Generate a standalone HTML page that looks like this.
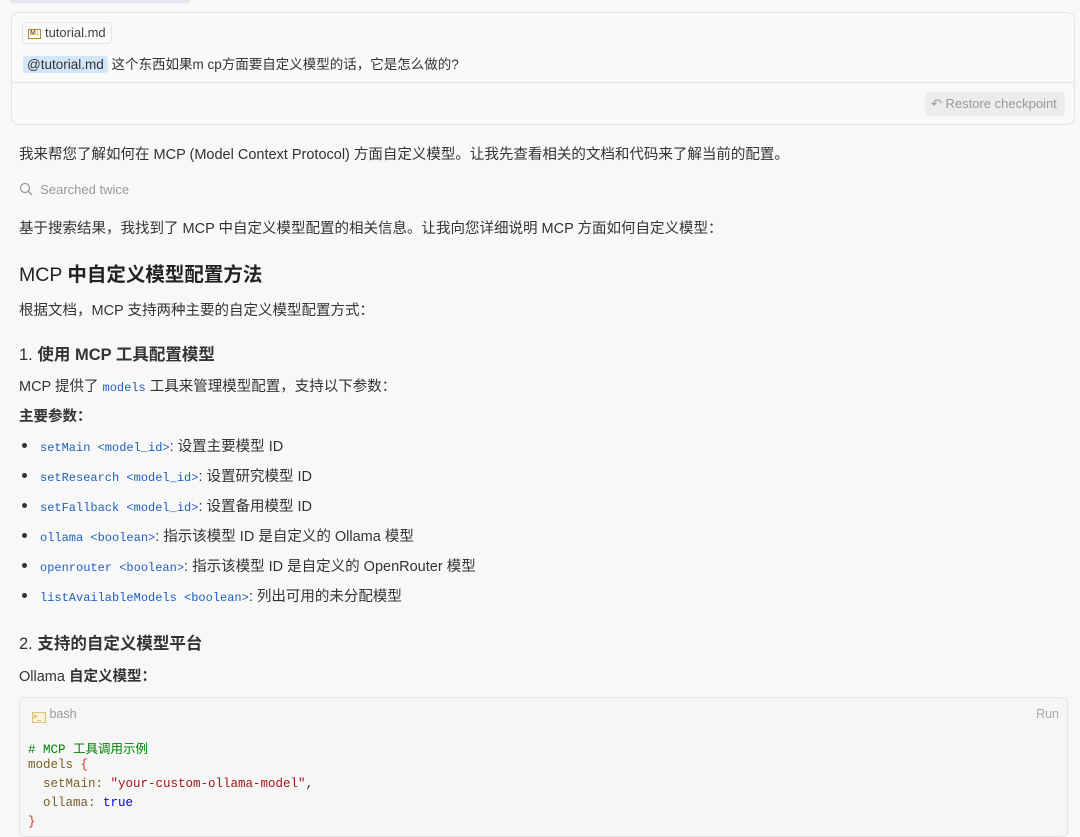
<!DOCTYPE html>
<html><head><meta charset="utf-8"><style>
*{margin:0;padding:0;box-sizing:border-box}
body{width:1080px;height:822px;overflow:hidden;background:#f8f8f8;font-family:"Liberation Sans","Noto Sans CJK SC",sans-serif;color:#333;font-size:14.5px;position:relative}
.a{position:absolute;white-space:nowrap}
.box{position:absolute;left:11px;top:12px;width:1064px;height:113px;border:1px solid #e3e3e3;border-radius:8px;background:#f9f9f9}
.chip{position:absolute;left:10px;top:9px;height:22px;padding:0 5px;border:1px solid #e6e6e6;border-radius:4px;font-size:13px;line-height:20px;color:#444;background:#fafafa}
.mention{background:#d3e6f8;border-radius:3px;padding:1px 4px;color:#333}
.code{font-family:"Liberation Mono",monospace;font-size:12px;color:#1f5fbf}
h2{font-size:19.5px;font-weight:normal;color:#222}
.b{font-weight:bold}
.li{position:absolute;left:22px;white-space:nowrap}
.li:before{content:"";position:absolute;left:0;top:8px;width:5px;height:5px;border-radius:50%;background:#333}
.li span.t{margin-left:18px}
.cb{position:absolute;left:19px;top:697px;width:1049px;height:140px;border:1px solid #e3e3e3;border-radius:6px;background:#f6f6f6}
.cl{position:absolute;left:8px;font-family:"Liberation Mono",monospace;font-size:12.5px;white-space:pre;color:#795e26}
</style></head><body>
<div class="a" style="left:10px;top:0;width:180px;height:3px;background:#e4e6ee;border-radius:0 0 3px 3px"></div>
<div class="box">
 <div class="chip"><span style="display:inline-block;font-size:7px;border:1px solid #b38a3a;color:#8a6a2a;line-height:8px;padding:0 1px;vertical-align:2px;font-weight:bold">M↓</span> tutorial.md</div>
 <div class="a" style="left:11px;top:40px;font-size:13.5px"><span class="mention">@tutorial.md</span> 这个东西如果m cp方面要自定义模型的话，它是怎么做的?</div>
 <div class="a" style="left:0;top:69px;width:1062px;height:1px;background:#e6e6e6"></div>
 <div class="a" style="left:913px;top:79px;width:140px;height:24px;background:#ececec;border-radius:4px;font-size:13px;color:#999;line-height:24px;padding-left:6px">↶ Restore checkpoint</div>
</div>
<div class="a" style="left:19px;top:143px">我来帮您了解如何在 MCP (Model Context Protocol) 方面自定义模型。让我先查看相关的文档和代码来了解当前的配置。</div>
<div class="a" style="left:19px;top:182px;font-size:13px;color:#999"><svg width="14" height="14" viewBox="0 0 14 14" style="vertical-align:-2px"><circle cx="6" cy="6" r="4.5" fill="none" stroke="#999" stroke-width="1.3"/><path d="M9.3 9.3L13 13" stroke="#999" stroke-width="1.4"/></svg>&nbsp; Searched twice</div>
<div class="a" style="left:19px;top:217px">基于搜索结果，我找到了 MCP 中自定义模型配置的相关信息。让我向您详细说明 MCP 方面如何自定义模型：</div>
<h2 class="a" style="left:19px;top:258px">MCP <b>中自定义模型配置方法</b></h2>
<div class="a" style="left:19px;top:299px">根据文档，MCP 支持两种主要的自定义模型配置方式：</div>
<div class="a" style="left:19px;top:341px;font-size:16.5px">1. <b>使用 MCP 工具配置模型</b></div>
<div class="a" style="left:19px;top:375px">MCP 提供了 <span class="code">models</span> 工具来管理模型配置，支持以下参数：</div>
<div class="a b" style="left:19px;top:405px">主要参数：</div>
<div class="li" style="top:435px"><span class="t"><span class="code">setMain &lt;model_id&gt;</span>: 设置主要模型 ID</span></div>
<div class="li" style="top:465px"><span class="t"><span class="code">setResearch &lt;model_id&gt;</span>: 设置研究模型 ID</span></div>
<div class="li" style="top:495px"><span class="t"><span class="code">setFallback &lt;model_id&gt;</span>: 设置备用模型 ID</span></div>
<div class="li" style="top:525px"><span class="t"><span class="code">ollama &lt;boolean&gt;</span>: 指示该模型 ID 是自定义的 Ollama 模型</span></div>
<div class="li" style="top:555px"><span class="t"><span class="code">openrouter &lt;boolean&gt;</span>: 指示该模型 ID 是自定义的 OpenRouter 模型</span></div>
<div class="li" style="top:585px"><span class="t"><span class="code">listAvailableModels &lt;boolean&gt;</span>: 列出可用的未分配模型</span></div>
<div class="a" style="left:19px;top:630px;font-size:16.5px">2. <b>支持的自定义模型平台</b></div>
<div class="a" style="left:19px;top:665px">Ollama <b>自定义模型：</b></div>
<div class="cb">
 <div class="a" style="left:12px;top:9px;font-size:12.5px;color:#999"><span style="display:inline-block;width:14px;height:11px;border:1px solid #d9c27a;background:#fbf3d5;vertical-align:-1px;font-size:7px;line-height:9px;color:#a08a40">&gt;_</span> bash</div>
 <div class="a" style="right:8px;top:9px;font-size:12.5px;color:#aaa">Run</div>
 <div class="cl" style="top:40px;color:#008000">#&nbsp;MCP 工具调用示例</div>
 <div class="cl" style="top:60px">models <span style="color:#c33">{</span></div>
 <div class="cl" style="top:79px">  setMain: <span style="color:#a31515">"your-custom-ollama-model"</span><span style="color:#333">,</span></div>
 <div class="cl" style="top:98px">  ollama: <span style="color:#0000ff">true</span></div>
 <div class="cl" style="top:117px;color:#c33">}</div>
</div>
</body></html>
